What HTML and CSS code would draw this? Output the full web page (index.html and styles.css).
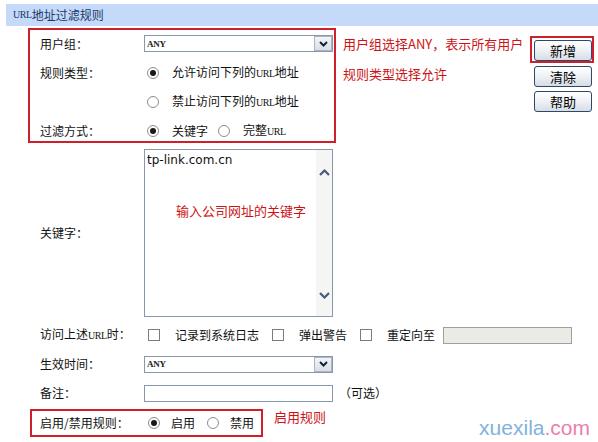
FILE: index.html
```html
<!DOCTYPE html>
<html lang="zh">
<head>
<meta charset="utf-8">
<title>URL地址过滤规则</title>
<link rel="stylesheet" href="styles.css">
</head>
<body>
<div class="header"><span class="lat">URL</span>地址过滤规则</div>

<div class="top">
  <div class="box1">
    <div class="row r1">
      <div class="label">用户组：</div>
      <div class="select"><span class="sel-val">ANY</span><span class="sel-btn"><svg width="9" height="6" viewBox="0 0 9 6"><path d="M1 1 L4.5 4.5 L8 1" fill="none" stroke="#17233d" stroke-width="2"/></svg></span></div>
    </div>
    <div class="row r2">
      <div class="label">规则类型：</div>
      <div class="opt"><span class="radio on"></span><span class="otext">允许访问下列的<span class="lat">URL</span>地址</span></div>
    </div>
    <div class="row r3">
      <div class="label"></div>
      <div class="opt"><span class="radio"></span><span class="otext">禁止访问下列的<span class="lat">URL</span>地址</span></div>
    </div>
    <div class="row r4">
      <div class="label">过滤方式：</div>
      <div class="opt"><span class="radio on"></span><span class="otext">关键字</span><span class="radio r-second"></span><span class="otext">完整<span class="lat">URL</span></span></div>
    </div>
  </div>
  <div class="notes">
    <div class="note n1">用户组选择ANY，表示所有用户</div>
    <div class="note n2">规则类型选择允许</div>
  </div>
  <div class="btns">
    <div class="frame"><div class="btn">新增</div></div>
    <div class="btn b2">清除</div>
    <div class="btn b3">帮助</div>
  </div>
</div>

<div class="kw">
  <div class="label">关键字：</div>
  <div class="textarea">
    <div class="ta-body">
      <div class="ta-text">tp-link.com.cn</div>
      <div class="ta-note">输入公司网址的关键字</div>
    </div>
    <div class="ta-scroll">
      <svg width="11" height="7" viewBox="0 0 11 7"><path d="M1 6 L5.5 1.5 L10 6" fill="none" stroke="#4a5882" stroke-width="2.2"/></svg>
      <svg width="11" height="7" viewBox="0 0 11 7"><path d="M1 1 L5.5 5.5 L10 1" fill="none" stroke="#4a5882" stroke-width="2.2"/></svg>
    </div>
  </div>
</div>

<div class="row line l1">
  <div class="label">访问上述<span class="lat">URL</span>时：</div>
  <span class="check c1"></span><span class="ctext">记录到系统日志</span>
  <span class="check c2"></span><span class="ctext">弹出警告</span>
  <span class="check c3"></span><span class="ctext">重定向至</span>
  <span class="redir"></span>
</div>
<div class="row line l2">
  <div class="label">生效时间：</div>
  <div class="select"><span class="sel-val">ANY</span><span class="sel-btn"><svg width="9" height="6" viewBox="0 0 9 6"><path d="M1 1 L4.5 4.5 L8 1" fill="none" stroke="#17233d" stroke-width="2"/></svg></span></div>
</div>
<div class="row line l3">
  <div class="label">备注：</div>
  <div class="input"></div>
  <span class="opt-hint">（可选）</span>
</div>

<div class="bottom">
  <div class="box2">
    <div class="label">启用/禁用规则：</div>
    <span class="radio on"></span><span class="otext">启用</span>
    <span class="radio r-third"></span><span class="otext">禁用</span>
  </div>
  <div class="note n3">启用规则</div>
</div>

<div class="watermark"><span class="wm-a">xuexila</span><span class="wm-b">.com</span></div>
</body>
</html>
```

FILE: styles.css
```css
* { box-sizing: border-box; margin: 0; padding: 0; }

body {
  margin: 0;
  width: 598px;
  height: 442px;
  overflow: hidden;
  position: relative;
  background: #ffffff;
  color: #111111;
  font-family: "Noto Sans CJK SC", "Liberation Sans", sans-serif;
  font-size: 12px;
  line-height: 14px;
}

.lat {
  font-family: "Liberation Serif", serif;
  font-size: 10px;
  letter-spacing: -0.4px;
}

.header {
  margin: 4px 0 0 6px;
  height: 22px;
  background: #c4daf8;
  color: #22376a;
  display: flex;
  align-items: center;
  padding-left: 7px;
}

.top {
  display: flex;
  align-items: flex-start;
  margin: 2px 0 0 28px;
}

.box1 {
  width: 308px;
  height: 115px;
  border: 2px solid #cf1f2a;
  padding-left: 10px;
  flex: none;
}

.row { display: flex; align-items: center; }
.label { width: 104px; flex: none; }

.r1 { height: 27px; }
.r2 { height: 31px; }
.r3 { height: 28px; }
.r4 { height: 25px; padding-top: 5px; }

.select {
  width: 189px;
  height: 17px;
  border: 1px solid #8798ae;
  background: #fff;
  display: flex;
  align-items: center;
  justify-content: space-between;
}
.sel-val {
  font-family: "Liberation Serif", serif;
  font-weight: bold;
  font-size: 9px;
  padding-left: 2px;
  color: #222;
  letter-spacing: -0.3px;
}
.sel-btn {
  width: 18px;
  height: 15px;
  border: 1px solid #aab4c2;
  background: linear-gradient(#f3f5f8, #d9dfe7);
  display: flex;
  align-items: center;
  justify-content: center;
}

.opt { display: flex; align-items: center; padding-left: 3px; }
.radio {
  width: 12px;
  height: 12px;
  border: 1px solid #8c8c8c;
  border-radius: 50%;
  background: #fff;
  flex: none;
  display: flex;
  align-items: center;
  justify-content: center;
}
.radio.on::after {
  content: "";
  width: 6px;
  height: 6px;
  border-radius: 50%;
  background: #1a1a1a;
}
.otext { margin-left: 13px; }
.r-second { margin-left: 10px; }

.notes {
  margin-left: 7px;
  width: 187px;
  padding-top: 2px;
  flex: none;
}
.note { color: #cc1418; font-size: 13px; display: flex; align-items: center; }
.n1 { height: 27px; }
.n2 { height: 33px; }

.btns {
  width: 64px;
  margin-top: 8px;
  flex: none;
  display: flex;
  flex-direction: column;
  align-items: flex-start;
}
.frame {
  border: 2px solid #cf1f2a;
  padding: 2px 0 0 2px;
}
.btn {
  width: 58px;
  height: 21px;
  border: 1px solid #2d4869;
  border-radius: 3px;
  background: linear-gradient(#ffffff, #eef1f5 50%, #d6dde6);
  font-size: 13px;
  display: flex;
  align-items: center;
  justify-content: center;
  color: #000;
}
.b2 { margin: 3px 0 0 4px; }
.b3 { margin: 4px 0 0 4px; }

.kw {
  display: flex;
  align-items: center;
  margin: 6px 0 0 40px;
}
.textarea {
  width: 189px;
  height: 168px;
  border: 1px solid #8798ae;
  display: flex;
  background: #fff;
}
.ta-body { flex: 1; padding: 3px 0 0 2px; }
.ta-text {
  font-family: "DejaVu Sans", sans-serif;
  font-size: 12px;
  color: #111;
}
.ta-note {
  color: #cc1418;
  font-size: 13px;
  margin: 37px 0 0 29px;
}
.ta-scroll {
  width: 16px;
  background: #f5f5f3;
  display: flex;
  flex-direction: column;
  justify-content: space-between;
  align-items: center;
  padding: 19px 0 17px;
}

.line { margin-left: 40px; }
.l1 { margin-top: 3px; height: 30px; }
.l2 { height: 28px; }
.l3 { height: 30px; }

.check {
  width: 12px;
  height: 12px;
  border: 1px solid #7c7c7c;
  background: #fff;
  flex: none;
}
.c1 { margin-left: 4px; }
.c2 { margin-left: 13px; }
.c3 { margin-left: 13px; }
.ctext { margin-left: 15px; }
.redir {
  width: 129px;
  height: 17px;
  margin-left: 8px;
  background: #ebeae5;
  border: 1px solid #98a0a8;
}

.input {
  width: 189px;
  height: 17px;
  border: 1px solid #8798ae;
  background: #fff;
}
.opt-hint { margin-left: 6px; }

.bottom {
  display: flex;
  align-items: flex-start;
  margin: 1px 0 0 30px;
}
.box2 {
  width: 233px;
  height: 28px;
  border: 2px solid #cf1f2a;
  padding-left: 8px;
  display: flex;
  align-items: center;
}
.box2 .radio { margin-left: 4px; }
.box2 .otext { margin-left: 11px; }
.box2 .r-third { margin-left: 12px; }
.n3 { margin: 1px 0 0 11px; height: 14px; }

.watermark {
  position: absolute;
  right: 8px;
  bottom: 3px;
  font-family: "Liberation Sans", sans-serif;
  font-size: 21px;
  line-height: 22px;
}
.wm-a { color: #7fb3dc; }
.wm-b { color: #ea7fae; }
```
